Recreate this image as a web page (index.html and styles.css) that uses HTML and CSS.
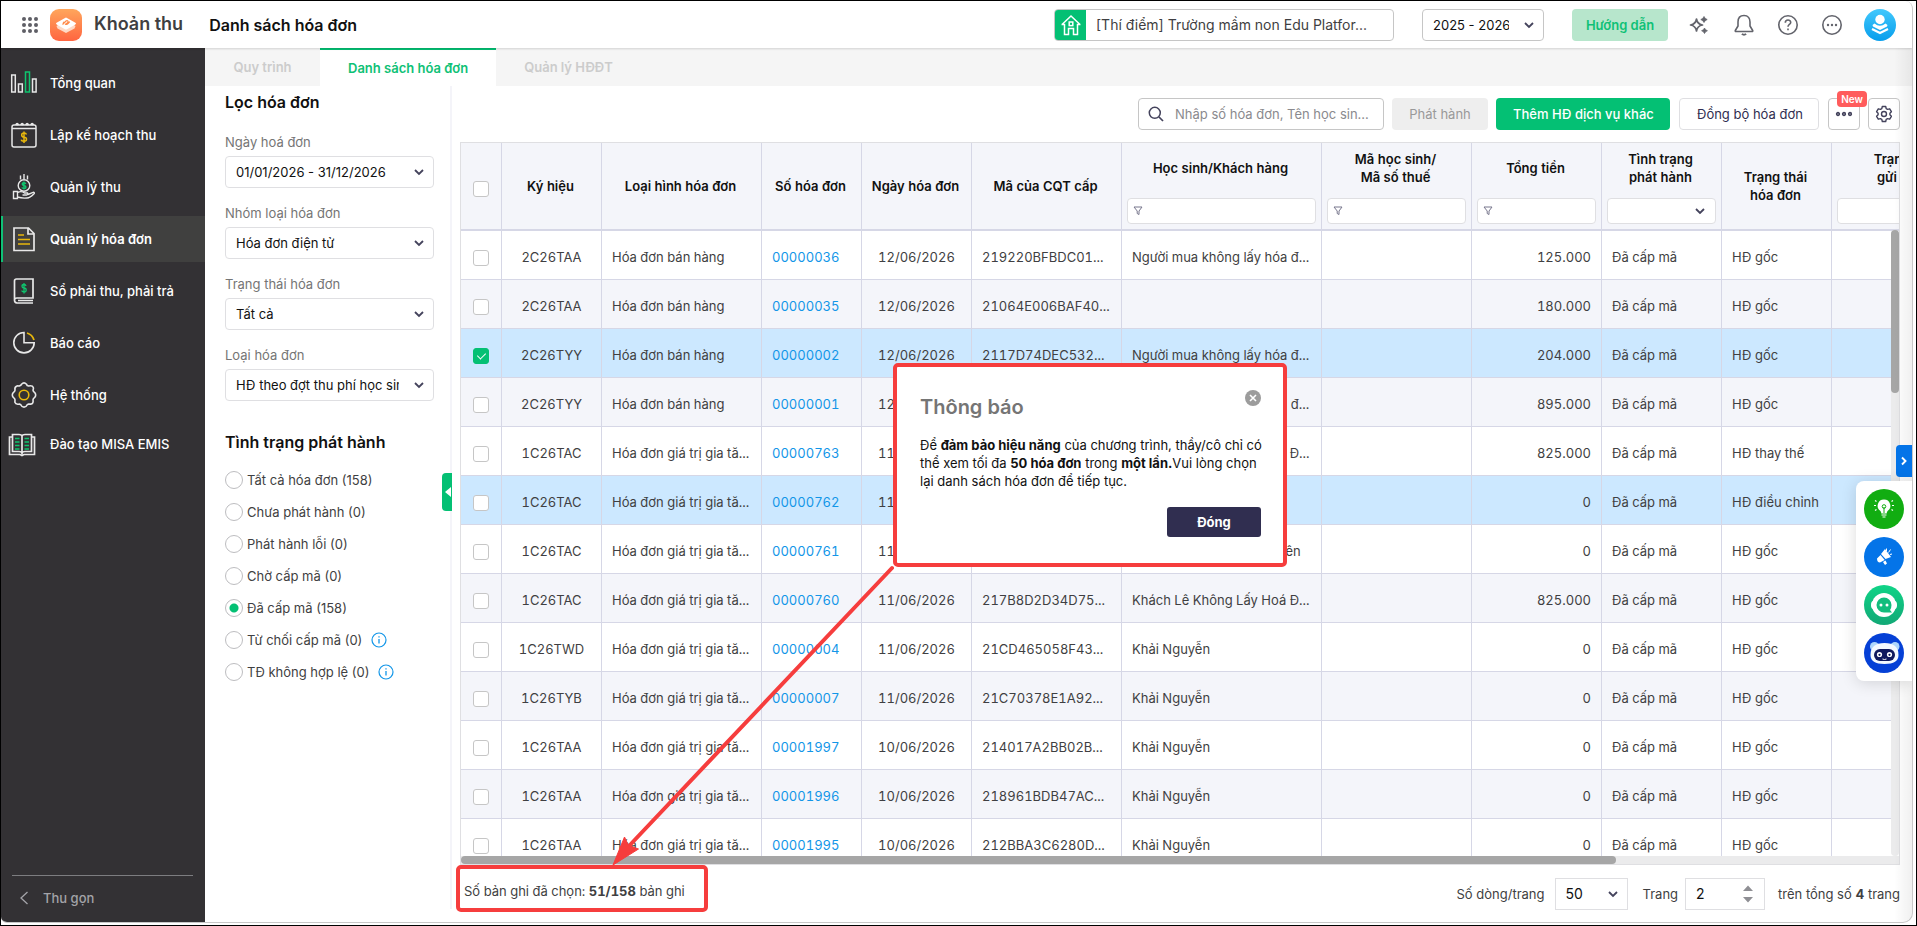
FILE: index.html
```html
<!DOCTYPE html>
<html lang="vi">
<head>
<meta charset="utf-8">
<title>Danh sách hóa đơn</title>
<link rel="stylesheet" href="styles.css">
</head>
<body>
<svg class="sprite" aria-hidden="true">
  <symbol id="chevron" viewBox="0 0 10 10"><path d="M1 3l4 4 4-4" fill="none" stroke="#44435c" stroke-width="1.8"/></symbol>
  <symbol id="funnel" viewBox="0 0 10 10"><path d="M1 1h8L6 5v3.5L4.200 7.500V5z" fill="none" stroke="#77768c" stroke-width="1"/></symbol>
  <symbol id="info" viewBox="0 0 16 16"><circle cx="8" cy="8" r="7" fill="none" stroke="#1296e8" stroke-width="1.200"/><path d="M8 7v4.500M8 4.200v1.400" stroke="#1296e8" stroke-width="1.300"/></symbol>
</svg>
<div class="window">
<div class="app">
  <header class="topbar">
    <button class="icon-btn" aria-label="Ứng dụng"><svg width="18" height="18" viewBox="0 0 18 18" fill="#5f5f66"><circle cx="3" cy="3" r="2"/><circle cx="9" cy="3" r="2"/><circle cx="15" cy="3" r="2"/><circle cx="3" cy="9" r="2"/><circle cx="9" cy="9" r="2"/><circle cx="15" cy="9" r="2"/><circle cx="3" cy="15" r="2"/><circle cx="9" cy="15" r="2"/><circle cx="15" cy="15" r="2"/></svg></button>
    <svg class="logo" width="32" height="32" viewBox="0 0 32 32"><defs><linearGradient id="lg" x1="0" y1="0" x2="0" y2="1"><stop offset="0" stop-color="#ffa65c"/><stop offset="1" stop-color="#ff6540"/></linearGradient></defs><rect width="32" height="32" rx="9" fill="url(#lg)"/><path d="M6.500 17l9.500-6 9.500 6-1 2.500L16 24l-8.500-4.500z" fill="#ffd9c6"/><path d="M6 14.500Q6 14 7 13.500l8-4.600q1-.6 2 0l8 4.600q1 .5 1 1t-1 1.200l-8 4.600q-1 .6-2 0l-8-4.600q-1-.6-1-1.200z" fill="#fff"/><path d="M12.500 15.500l3.500-3.500q1-.8 1.800 0t-.3 1.700l-2 1.800M14.500 14l-1.500-1M15 15q1.800 1 3-.4l1.800-2" fill="none" stroke="#ff8a4a" stroke-width="1.200"/></svg>
    <span class="product">Khoản thu</span>
    <h1 class="page-title">Danh sách hóa đơn</h1>
    <div class="school">
      <span class="school-icon"><svg width="22" height="22" viewBox="0 0 22 22" fill="none" stroke="#fff" stroke-width="1.500"><path d="M2 10.500l9-8.500 9 8.500M1.500 10.500h3v10h4v-6h5v6h4v-10h3"/><rect x="9.200" y="8" width="3.600" height="3.600"/></svg></span>
      <button class="school-name">[Thí điểm] Trường mầm non Edu Platfor...</button>
    </div>
    <div class="select year"><select aria-label="Năm học"><option>2025 - 2026</option></select><svg class="chev"><use href="#chevron"/></svg></div>
    <button class="btn guide">Hướng dẫn</button>
    <nav class="tools">
      <button class="icon-btn" aria-label="Trợ lý"><svg width="22" height="22" viewBox="0 0 22 22"><path d="M7.500 5q.8 5.200 6 6-5.200.8-6 6-.8-5.200-6-6 5.200-.8 6-6z" fill="none" stroke="#63646c" stroke-width="1.700" stroke-linejoin="round"/><path d="M15 2.500l1.200 1.900 2 1.100-2 1.200L15 8.500l-1.200-1.800-2-1.200 2-1.100zM15.500 14l1 1.700 1.900 1-1.900 1.100-1 1.700-1-1.700-1.900-1.100 1.900-1z" fill="#63646c" stroke="#63646c" stroke-width=".8"/></svg></button>
      <button class="icon-btn" aria-label="Thông báo"><svg width="22" height="22" viewBox="0 0 22 22" fill="none" stroke="#63646c" stroke-width="1.600" stroke-linejoin="round"><path d="M11 1.500c-4.200 0-6 3-6 6.500v4L2.300 16.500q-.3 1 .7 1h16q1 0 .7-1L17 12V8c0-3.500-1.800-6.500-6-6.500z"/><path d="M8.800 20q2.200 1.300 4.400 0" stroke-width="2"/></svg></button>
      <button class="icon-btn" aria-label="Trợ giúp"><svg width="22" height="22" viewBox="0 0 22 22" fill="none" stroke="#63646c" stroke-width="1.600"><circle cx="11" cy="11" r="9.200"/><path d="M8.300 8.800c0-3.700 5.400-3.500 5.400-.3 0 2-2.700 2-2.700 4.300M11 14.500v1.700"/></svg></button>
      <button class="icon-btn" aria-label="Thêm"><svg width="22" height="22" viewBox="0 0 22 22"><circle cx="11" cy="11" r="9.200" fill="none" stroke="#63646c" stroke-width="1.600"/><circle cx="7" cy="11" r="1.200" fill="#63646c"/><circle cx="11" cy="11" r="1.200" fill="#63646c"/><circle cx="15" cy="11" r="1.200" fill="#63646c"/></svg></button>
    </nav>
    <button class="icon-btn avatar" aria-label="Tài khoản"><svg width="32" height="32" viewBox="0 0 32 32"><defs><linearGradient id="av" x1="0" y1="0" x2="0" y2="1"><stop offset="0" stop-color="#42c8fc"/><stop offset="1" stop-color="#079eec"/></linearGradient></defs><circle cx="16" cy="16" r="16" fill="url(#av)"/><circle cx="16" cy="10.500" r="4.700" fill="#fff"/><path d="M10.500 14.500Q16 19 21.500 14.500l2 1.500-.5 1.500-7 3.500-7-3.500-.5-1.500z" fill="#fff"/><path d="M8 20l8 4 8-4" fill="none" stroke="#fff" stroke-width="2.200"/></svg></button>
  </header>

  <div class="body">
    <nav class="sidebar">
      <a class="nav-item" href="#"><svg width="28" height="28" viewBox="0 0 28 28" fill="none" stroke="#e8e8e8" stroke-width="1.500"><rect x="1.700" y="6" width="3.600" height="17"/><rect x="8.500" y="15" width="3.800" height="8"/><rect x="15.500" y="3" width="4" height="20" stroke="#0fc46e"/><rect x="22.500" y="10" width="3.600" height="13"/></svg>Tổng quan</a>
      <a class="nav-item" href="#"><svg width="28" height="28" viewBox="0 0 28 28" fill="none" stroke="#e8e8e8" stroke-width="1.500"><rect x="2" y="4" width="24" height="22" rx="2"/><path d="M2 7.500h24"/><path d="M6 4q1-2.500 2.500 0M11 4q1-2.500 2.500 0M16 4q1-2.500 2.500 0M21 4q1-2.500 2.500 0" stroke-width="2"/><path d="M16.500 13.500q-.5-1.500-2.500-1.500-2.300 0-2.300 2T14 16.300q2.500 0 2.500 2t-2.500 2-2.700-1.600M14 10.500v11.500" stroke="#e8b70c"/></svg>Lập kế hoạch thu</a>
      <a class="nav-item" href="#"><svg width="28" height="28" viewBox="0 0 28 28" fill="none" stroke="#e8e8e8" stroke-width="1.400"><path d="M14 1v5M10.500 2.500v4M17.500 2.500v4"/><circle cx="14" cy="12.500" r="5.800"/><path d="M15.800 11q-.4-1.300-1.800-1.300-1.800 0-1.800 1.400T14 12.600q1.900 0 1.900 1.500T14 15.500t-2-1.200M14 8.500v8" stroke="#0fc46e"/><path d="M3.500 18.500h4v7h-4zM7.500 19.500q4-2 7 .5h3q1 1.500-1 2h-4M18 21.500l5.500-2.300q1.500.5.500 1.600-4 4.200-7 4.200-5 .5-9.500-1"/></svg>Quản lý thu</a>
      <a class="nav-item active" href="#" aria-current="page"><svg width="28" height="28" viewBox="0 0 28 28" fill="none" stroke="#e8e8e8" stroke-width="1.700"><path d="M4 3h14.500l5.500 5.500V25.500H4zM18 3v6h6"/><path d="M8 10h6M8 14.500h12M8 19h12" stroke="#e8b70c" stroke-width="1.500"/></svg>Quản lý hóa đơn</a>
      <a class="nav-item" href="#"><svg width="28" height="28" viewBox="0 0 28 28" fill="none" stroke="#e8e8e8" stroke-width="1.700"><path d="M4.500 23.500V4q0-2 2-2H23v19H7q-2.500 0-2.500 2.300T7 26h16M8 23.500h15"/><path d="M16 9q-.3-1.500-2-1.500-2 0-2 1.700t2 1.800q2.200 0 2.200 2t-2.200 1.800-2.200-1.400M14 6v10.500" stroke="#0fc46e" stroke-width="1.300"/></svg>Sổ phải thu, phải trả</a>
      <a class="nav-item" href="#"><svg width="28" height="28" viewBox="0 0 28 28" fill="none" stroke="#e8e8e8" stroke-width="1.600"><path d="M14 3.500a10.200 10.200 0 1 0 10.200 10.200H14z"/><path d="M17 4a10.500 10.500 0 0 1 7 7" stroke="#e8b70c" stroke-width="1.800"/></svg>Báo cáo</a>
      <a class="nav-item" href="#"><svg width="28" height="28" viewBox="0 0 28 28" fill="none" stroke="#e8e8e8" stroke-width="1.600" stroke-linejoin="round"><path d="M11.500 3.200q2.500-2.600 5 0l.7 1.300 1.500.5q3.800-.8 4.600 1.600.4 1.300-.3 2.600.2 1.300 1.200 1.900 1.500 1.200 1.500 2.900t-1.500 2.900q-1 .6-1.200 1.900.7 3.800-2.300 4.300l-2-.1-1.500.7q-1 2.400-3.200 2.400t-3.200-2.400l-1.500-.7q-3.600.8-4.400-1.700l.1-2.500q-.2-1.300-1.200-1.900Q2.300 15.700 2.300 14t1.500-2.900Q4.800 10.500 5 9.200q-.7-3.500 2-4.300l2.300.1 1.500-.7z"/><circle cx="14" cy="14" r="4.800" stroke="#e8b70c"/></svg>Hệ thống</a>
      <a class="nav-item" href="#"><svg class="book" width="28" height="28" viewBox="0 0 28 28" fill="none" stroke="#e8e8e8" stroke-width="1.700"><path d="M4.500 4.500H11q2.500 0 3 1.500.5-1.500 3-1.500h6.500v17H17q-2.500 0-3 1.500-.5-1.500-3-1.500H4.500zM14 6v18M4 7H1.500v17.500H12l2 1 2-1h10.500V7H24"/><path d="M7 8.500h4.500M7 12h4.500M7 15.500h4.500M7 19h4.500M16.500 8.500H21M16.500 12H21M16.500 15.500H21M16.500 19H21" stroke="#0fc46e" stroke-width="1.500"/></svg>Đào tạo MISA EMIS</a>
      <button class="collapse"><svg width="10" height="14" viewBox="0 0 10 14"><path d="M8.500 1L2 7l6.500 6" fill="none" stroke="#a3a3a8" stroke-width="1.300"/></svg>Thu gọn</button>
    </nav>

    <div class="content">
      <nav class="tabs">
        <a class="tab" href="#">Quy trình</a>
        <a class="tab current" href="#" aria-current="page">Danh sách hóa đơn</a>
        <a class="tab" href="#">Quản lý HĐĐT</a>
      </nav>
      <div class="panes">
        <aside class="filters">
          <h2>Lọc hóa đơn</h2>
          <label for="f1">Ngày hoá đơn</label>
          <div class="select"><select id="f1"><option>01/01/2026 - 31/12/2026</option></select><svg class="chev"><use href="#chevron"/></svg></div>
          <label for="f2">Nhóm loại hóa đơn</label>
          <div class="select"><select id="f2"><option>Hóa đơn điện tử</option></select><svg class="chev"><use href="#chevron"/></svg></div>
          <label for="f3">Trạng thái hóa đơn</label>
          <div class="select"><select id="f3"><option>Tất cả</option></select><svg class="chev"><use href="#chevron"/></svg></div>
          <label for="f4">Loại hóa đơn</label>
          <div class="select"><select id="f4"><option>HĐ theo đợt thu phí học sinh</option></select><svg class="chev"><use href="#chevron"/></svg></div>
          <h2 class="second">Tình trạng phát hành</h2>
          <label class="radio"><input type="radio" name="st">Tất cả hóa đơn (158)</label>
          <label class="radio"><input type="radio" name="st">Chưa phát hành (0)</label>
          <label class="radio"><input type="radio" name="st">Phát hành lỗi (0)</label>
          <label class="radio"><input type="radio" name="st">Chờ cấp mã (0)</label>
          <label class="radio"><input type="radio" name="st" checked>Đã cấp mã (158)</label>
          <label class="radio"><input type="radio" name="st">Từ chối cấp mã (0)<svg class="info"><use href="#info"/></svg></label>
          <label class="radio"><input type="radio" name="st">TĐ không hợp lệ (0)<svg class="info"><use href="#info"/></svg></label>
          <button class="handle" aria-label="Thu gọn bộ lọc"><svg width="6" height="10" viewBox="0 0 6 10"><path d="M6 0v10L0 5z" fill="#fff"/></svg></button>
        </aside>

        <main class="main">
          <div class="toolbar">
            <div class="search"><svg width="16" height="16" viewBox="0 0 16 16"><circle cx="6.800" cy="6.800" r="5.500" fill="none" stroke="#44435c" stroke-width="1.500"/><path d="M11 11l4 4" stroke="#44435c" stroke-width="1.700"/></svg><input type="text" aria-label="Tìm kiếm" placeholder="Nhập số hóa đơn, Tên học sin..."></div>
            <button class="btn muted" disabled>Phát hành</button>
            <button class="btn primary">Thêm HĐ dịch vụ khác</button>
            <button class="btn outline">Đồng bộ hóa đơn</button>
            <button class="btn square" aria-label="Khác"><svg width="18" height="6" viewBox="0 0 18 6" fill="#8a8998" stroke="#44435c" stroke-width="1.300"><circle cx="3" cy="3" r="1.500"/><circle cx="9" cy="3" r="1.500"/><circle cx="15" cy="3" r="1.500"/></svg><span class="badge">New</span></button>
            <button class="btn square" aria-label="Thiết lập"><svg width="18" height="18" viewBox="0 0 18 18" fill="none" stroke="#44435c" stroke-width="1.400" stroke-linejoin="round"><path d="M7.300 1.500h3.400l.5 2.100 1.400.8 2.100-.6 1.700 2.900-1.500 1.500v1.600l1.500 1.500-1.700 2.900-2.100-.6-1.400.8-.5 2.100H7.300l-.5-2.100-1.400-.8-2.100.6-1.700-2.900 1.500-1.500V8.200L1.600 6.700l1.700-2.900 2.100.6 1.400-.8z"/><circle cx="9" cy="9" r="2.500"/></svg></button>
          </div>

          <div class="grid">
            <table>
              <colgroup><col class="w41"><col class="w100"><col class="w160"><col class="w100"><col class="w110"><col class="w150"><col class="w200"><col class="w150"><col class="w130"><col class="w120"><col class="w110"><col class="w150"></colgroup>
              <thead><tr>
                <th><input type="checkbox" aria-label="Chọn tất cả"></th>
                <th>Ký hiệu</th><th>Loại hình hóa đơn</th><th>Số hóa đơn</th><th>Ngày hóa đơn</th><th>Mã của CQT cấp</th>
                <th><div class="fhead"><span>Học sinh/Khách hàng</span><div class="fbox"><svg class="fun"><use href="#funnel"/></svg><input type="text" aria-label="Lọc khách hàng"></div></div></th>
                <th><div class="fhead"><span>Mã học sinh/<br>Mã số thuế</span><div class="fbox"><svg class="fun"><use href="#funnel"/></svg><input type="text" aria-label="Lọc mã"></div></div></th>
                <th><div class="fhead"><span>Tổng tiền</span><div class="fbox"><svg class="fun"><use href="#funnel"/></svg><input type="text" aria-label="Lọc tổng tiền"></div></div></th>
                <th><div class="fhead"><span>Tình trạng<br>phát hành</span><div class="fbox"><select aria-label="Lọc tình trạng"><option></option></select><svg class="chev"><use href="#chevron"/></svg></div></div></th>
                <th>Trạng thái<br>hóa đơn</th>
                <th><div class="fhead"><span>Trạng thái<br>gửi email</span><div class="fbox"><input type="text" aria-label="Lọc gửi"></div></div></th>
              </tr></thead>
              <tbody>
                <tr><td><input type="checkbox" aria-label="Chọn"></td><td>2C26TAA</td><td>Hóa đơn bán hàng</td><td><a href="#">00000036</a></td><td>12/06/2026</td><td>219220BFBDC01...</td><td>Người mua không lấy hóa đ...</td><td></td><td>125.000</td><td>Đã cấp mã</td><td>HĐ gốc</td><td></td></tr>
                <tr><td><input type="checkbox" aria-label="Chọn"></td><td>2C26TAA</td><td>Hóa đơn bán hàng</td><td><a href="#">00000035</a></td><td>12/06/2026</td><td>21064E006BAF40...</td><td></td><td></td><td>180.000</td><td>Đã cấp mã</td><td>HĐ gốc</td><td></td></tr>
                <tr class="sel"><td><input type="checkbox" aria-label="Chọn" checked></td><td>2C26TYY</td><td>Hóa đơn bán hàng</td><td><a href="#">00000002</a></td><td>12/06/2026</td><td>2117D74DEC532...</td><td>Người mua không lấy hóa đ...</td><td></td><td>204.000</td><td>Đã cấp mã</td><td>HĐ gốc</td><td></td></tr>
                <tr><td><input type="checkbox" aria-label="Chọn"></td><td>2C26TYY</td><td>Hóa đơn bán hàng</td><td><a href="#">00000001</a></td><td>12/06/2026</td><td></td><td>Người mua không lấy hóa đ...</td><td></td><td>895.000</td><td>Đã cấp mã</td><td>HĐ gốc</td><td></td></tr>
                <tr><td><input type="checkbox" aria-label="Chọn"></td><td>1C26TAC</td><td>Hóa đơn giá trị gia tă...</td><td><a href="#">00000763</a></td><td>11/06/2026</td><td></td><td>Khách Lê Không Lấy Hoá Đ...</td><td></td><td>825.000</td><td>Đã cấp mã</td><td>HĐ thay thế</td><td></td></tr>
                <tr class="sel"><td><input type="checkbox" aria-label="Chọn"></td><td>1C26TAC</td><td>Hóa đơn giá trị gia tă...</td><td><a href="#">00000762</a></td><td>11/06/2026</td><td></td><td></td><td></td><td>0</td><td>Đã cấp mã</td><td>HĐ điều chỉnh</td><td></td></tr>
                <tr><td><input type="checkbox" aria-label="Chọn"></td><td>1C26TAC</td><td>Hóa đơn giá trị gia tă...</td><td><a href="#">00000761</a></td><td>11/06/2026</td><td></td><td>Nguyễn Hoàng Bảo Khuyên</td><td></td><td>0</td><td>Đã cấp mã</td><td>HĐ gốc</td><td></td></tr>
                <tr><td><input type="checkbox" aria-label="Chọn"></td><td>1C26TAC</td><td>Hóa đơn giá trị gia tă...</td><td><a href="#">00000760</a></td><td>11/06/2026</td><td>217B8D2D34D75...</td><td>Khách Lê Không Lấy Hoá Đ...</td><td></td><td>825.000</td><td>Đã cấp mã</td><td>HĐ gốc</td><td></td></tr>
                <tr><td><input type="checkbox" aria-label="Chọn"></td><td>1C26TWD</td><td>Hóa đơn giá trị gia tă...</td><td><a href="#">00000004</a></td><td>11/06/2026</td><td>21CD465058F43...</td><td>Khải Nguyễn</td><td></td><td>0</td><td>Đã cấp mã</td><td>HĐ gốc</td><td></td></tr>
                <tr><td><input type="checkbox" aria-label="Chọn"></td><td>1C26TYB</td><td>Hóa đơn giá trị gia tă...</td><td><a href="#">00000007</a></td><td>11/06/2026</td><td>21C70378E1A92...</td><td>Khải Nguyễn</td><td></td><td>0</td><td>Đã cấp mã</td><td>HĐ gốc</td><td></td></tr>
                <tr><td><input type="checkbox" aria-label="Chọn"></td><td>1C26TAA</td><td>Hóa đơn giá trị gia tă...</td><td><a href="#">00001997</a></td><td>10/06/2026</td><td>214017A2BB02B...</td><td>Khải Nguyễn</td><td></td><td>0</td><td>Đã cấp mã</td><td>HĐ gốc</td><td></td></tr>
                <tr><td><input type="checkbox" aria-label="Chọn"></td><td>1C26TAA</td><td>Hóa đơn giá trị gia tă...</td><td><a href="#">00001996</a></td><td>10/06/2026</td><td>218961BDB47AC...</td><td>Khải Nguyễn</td><td></td><td>0</td><td>Đã cấp mã</td><td>HĐ gốc</td><td></td></tr>
                <tr><td><input type="checkbox" aria-label="Chọn"></td><td>1C26TAA</td><td>Hóa đơn giá trị gia tă...</td><td><a href="#">00001995</a></td><td>10/06/2026</td><td>212BBA3C6280D...</td><td>Khải Nguyễn</td><td></td><td>0</td><td>Đã cấp mã</td><td>HĐ gốc</td><td></td></tr>
              </tbody>
            </table>
            <div class="vtrack"><div class="vthumb"></div></div>
            <div class="htrack"><div class="hthumb"></div></div>
          </div>

          <footer class="footer">
            <p class="count">Số bản ghi đã chọn: <b>51/158</b> bản ghi</p>
            <label for="size">Số dòng/trang</label>
            <div class="select size"><select id="size"><option>50</option></select><svg class="chev"><use href="#chevron"/></svg></div>
            <label for="page">Trang</label>
            <div class="spin"><input id="page" type="text" value="2"><svg width="10" height="18" viewBox="0 0 10 18" fill="#8f8f94"><path d="M0 6l5-5.500L10 6zM0 12h10l-5 5.500z"/></svg></div>
            <span class="total">trên tổng số <b>4</b> trang</span>
          </footer>
        </main>
      </div>
    </div>
  </div>
  <div class="edge"></div>
  <button class="dock-toggle" aria-label="Ẩn tiện ích"><svg width="8" height="10" viewBox="0 0 8 10"><path d="M2 1.500L5.500 5 2 8.500" fill="none" stroke="#fff" stroke-width="1.900"/></svg></button>
  <div class="dock">
    <button aria-label="Gợi ý"><svg width="40" height="40" viewBox="0 0 40 40"><circle cx="20" cy="20" r="20" fill="#11ad11"/><path d="M20 10.500a6.300 6.300 0 0 0-3.600 11.500q.8.900.9 2.500h5.400q.1-1.600.9-2.500A6.300 6.300 0 0 0 20 10.500z" fill="#fff"/><path d="M17.500 26h5M18.500 28h3" stroke="#fff" stroke-width="1.200"/><path d="M20 24v-6" stroke="#11ad11" stroke-width="1"/><circle cx="20" cy="17.500" r="1.800" fill="none" stroke="#11ad11"/><path d="M12.500 12.500l-1.500-1M27.500 12.500l1.500-1M12 16.500h-2M28 16.500h2M12.500 20.500l-1.500 1M27.500 20.500l1.500 1" stroke="#fff" stroke-width="1.200"/></svg></button>
    <button aria-label="Tin tức"><svg width="40" height="40" viewBox="0 0 40 40"><circle cx="20" cy="20" r="20" fill="#0474e8"/><path d="M17 17l4-5 6 8-5.500 2zM13 21.500l3.500-3.500 4.200 5L16 25.500q-3 0-3-4zM19 25l2.500-1.500 1.500 3-2 1.500z" fill="#fff"/><path d="M22.500 14V11.500M24.500 15.500l2-3M26 17.500l2-.5" stroke="#fff" stroke-width="1"/></svg></button>
    <button aria-label="Hỗ trợ"><svg width="40" height="40" viewBox="0 0 40 40"><defs><linearGradient id="ch" x1="0" y1="0" x2="0" y2="1"><stop offset="0" stop-color="#10d487"/><stop offset="1" stop-color="#12a876"/></linearGradient></defs><circle cx="20" cy="20" r="20" fill="url(#ch)"/><circle cx="20" cy="20" r="12" fill="#fff"/><rect x="7" y="15.500" width="26" height="9" rx="4" fill="#fff"/><path d="M28 27.500h-8a7.500 7.500 0 1 1 7.500-7.500q0 3-1.500 5z" fill="#12bd7d"/><circle cx="17" cy="20" r="1.500" fill="#fff"/><circle cx="23" cy="20" r="1.500" fill="#fff"/></svg></button>
    <button aria-label="Trợ lý AI"><svg width="40" height="40" viewBox="0 0 40 40"><circle cx="20" cy="20" r="20" fill="#0540d6"/><circle cx="10.500" cy="13.500" r="4.500" fill="#aed6fb"/><circle cx="31" cy="13.500" r="4.500" fill="#aed6fb"/><path d="M6.500 22Q6.500 10 20.500 10T34.500 22q0 9-14 9t-14-9z" fill="#f4f9ff"/><rect x="10" y="16" width="21" height="12" rx="6" fill="#10195e"/><circle cx="15.500" cy="21.500" r="2.600" fill="#fff"/><circle cx="25.500" cy="21.500" r="2.600" fill="#fff"/><circle cx="15.500" cy="21.800" r="1.100" fill="#10195e"/><circle cx="25.500" cy="21.800" r="1.100" fill="#10195e"/><path d="M18.500 26q2 1 4 0" fill="none" stroke="#fff"/></svg></button>
  </div>
</div>

<section class="dialog" role="dialog" aria-labelledby="dlg">
  <div class="dialog-head"><h2 id="dlg">Thông báo</h2><button class="icon-btn close" aria-label="Đóng hộp thoại"><svg width="16" height="16" viewBox="0 0 16 16"><circle cx="8" cy="8" r="8" fill="#9c9c9c"/><path d="M5 5l6 6M11 5l-6 6" stroke="#fff" stroke-width="1.600"/></svg></button></div>
  <p>Để <b>đảm bảo hiệu năng</b> của chương trình, thầy/cô chỉ có thể xem tối đa <b>50 hóa đơn</b> trong <b>một lần.</b>Vui lòng chọn lại danh sách hóa đơn để tiếp tục.</p>
  <button class="ok">Đóng</button>
</section>
<div class="marker"></div>
<svg class="arrow" width="290" height="306" viewBox="0 0 290 306"><path d="M283 5L20 283" stroke="#f63d3d" stroke-width="4" stroke-linecap="round"/><path d="M4 302l11.500-28 4 8.500 10 3.500z" fill="#f63d3d" stroke="#f63d3d" stroke-width="1"/></svg>
</div>
</body>
</html>
```
FILE: styles.css
```css
* { box-sizing: border-box; }
body { margin: 0; font: 13px/18px Inter, "Liberation Sans", sans-serif; color: #3f3f42; }
button, input, select { font: inherit; color: inherit; margin: 0; }
button { cursor: pointer; }
a { text-decoration: none; }
h1, h2, p { margin: 0; }
.sprite { display: none; }

.window { position: relative; height: 100vh; border: 1px solid #000; padding: 0 3px 2px 0; background: #fff; overflow: hidden; }
.app { position: relative; height: 100%; display: flex; flex-direction: column; border-right: 1px solid #c8c8c8; border-bottom: 1px solid #c8c8c8; border-radius: 0 8px 10px 6px; overflow: hidden; }
.edge { position: absolute; inset: 0 0 0 auto; width: 18px; background: linear-gradient(to right, transparent, rgba(0,0,0,.06)); pointer-events: none; }

.topbar { position: relative; z-index: 1; flex: none; height: 47px; display: flex; align-items: center; padding: 0 16px 0 20px; background: #fff; box-shadow: 0 1px 2px rgba(0,0,0,.15); }
.icon-btn { display: flex; padding: 0; border: 0; background: none; }
.logo { margin: 0 12px 0 11px; }
.product { font-size: 18px; font-weight: 600; margin-right: 26px; padding-bottom: 2px; }
.page-title { font-size: 16px; font-weight: 600; color: #111; }
.school { display: flex; width: 340px; height: 32px; margin-left: auto; margin-right: 28px; border: 1px solid #c6c6c6; border-radius: 4px; overflow: hidden; }
.school-icon { flex: none; width: 31px; display: grid; place-items: center; background: #04c074; }
.school-name { flex: 1; padding: 0 10px; border: 0; background: none; text-align: left; font-size: 14px; white-space: nowrap; }
.select { position: relative; height: 32px; }
.select select { appearance: none; width: 100%; height: 100%; padding: 0 34px 0 10px; border: 1px solid #dfdfe2; border-radius: 4px; background: #fff; color: #111; }
.chev { position: absolute; right: 10px; top: 11px; width: 10px; height: 10px; pointer-events: none; }
.year { width: 122px; }
.year select { border-color: #c6c6c6; }
.btn { height: 32px; border-radius: 4px; border: 0; padding: 0 17px; white-space: nowrap; }
.guide { width: 96px; padding: 0; margin: 0 21px 0 28px; background: #b7e6cc; color: #0fc176; font-weight: 600; }
.tools { display: flex; gap: 22px; margin-right: 21px; }

.body { flex: 1; min-height: 0; display: flex; }
.sidebar { flex: none; width: 204px; display: flex; flex-direction: column; gap: 6px; padding-top: 12px; background: #333134; }
.nav-item { display: flex; align-items: center; gap: 12px; height: 46px; padding-left: 9px; color: #fff; font-weight: 500; }
.nav-item.active { background: #40403f; border-left: 2px solid #0fc176; padding-left: 7px; font-weight: 600; }
.nav-item:nth-last-child(2) { height: 40px; }
.book { margin: 0 2px 0 -2px; }
.collapse { display: flex; align-items: center; gap: 14px; height: 47px; margin: auto 12px 0 11px; padding: 0 0 2px 7px; border: 0; border-top: 1px solid #7d7d80; background: none; color: #a3a3a8; font-weight: 500; }

.content { flex: 1; min-width: 0; display: flex; flex-direction: column; }
.tabs { flex: none; display: flex; height: 38px; background: #f5f5f5; }
.tab { display: flex; align-items: center; justify-content: center; min-width: 115px; padding: 0 28px; color: #ccc; font-weight: 600; }
.tab.current { background: #fff; border-top: 2px solid #04c074; color: #0fc176; }
.panes { flex: 1; min-height: 0; display: flex; }

.filters { position: relative; flex: none; width: 247px; margin-bottom: 13px; padding: 6px 16px 0 20px; border-right: 2px solid #f4f4f9; }
.filters h2 { font-size: 16px; line-height: 20px; font-weight: 600; color: #111; }
.filters h2 + label { margin-top: 21px; }
.filters label { display: block; margin: 16px 0 5px; color: #757575; }
.filters h2.second { margin: 31px 0 19px; }
.filters label.radio { display: flex; align-items: center; height: 18px; margin: 0 0 14px; color: #3f3f42; }
.radio input { appearance: none; flex: none; width: 18px; height: 18px; margin-right: 4px; border: 1px solid #bdbdc0; border-radius: 50%; background: #fff; }
.radio input:checked { background: radial-gradient(circle, #04c074 4px, #fff 5px); }
.info { width: 16px; height: 16px; margin-left: 9px; }
.handle { position: absolute; right: -2px; top: 387px; width: 10px; height: 38px; padding: 0 1px 0 3px; border: 0; border-radius: 4px 0 0 4px; background: #04c074; display: grid; place-items: center; }

.main { flex: 1; min-width: 0; display: flex; flex-direction: column; padding: 12px 12px 12px 8px; }
.toolbar { display: flex; justify-content: flex-end; gap: 8px; margin-bottom: 12px; }
.search { display: flex; align-items: center; gap: 11px; width: 246px; padding-left: 9px; border: 1px solid #c6c6c6; border-radius: 4px; }
.search input { flex: 1; min-width: 0; border: 0; padding: 0; outline: 0; background: none; }
.search input::placeholder { color: #8a8a8e; }
.muted { width: 96px; background: #eee; color: #999; }
.primary { width: 174px; background: #04c074; color: #fff; font-weight: 500; }
.outline { width: 140px; margin: 0 1px; border: 1px solid #dfdfe2; background: #fff; color: #302e50; }
.square { position: relative; width: 32px; padding: 0; display: grid; place-items: center; border: 1px solid #c6c6c6; background: #fff; }
.badge { position: absolute; left: 8px; top: -8px; width: 30px; height: 16px; border-radius: 4px; background: #ff5c5c; color: #fff; font: 600 10px/16px Inter, sans-serif; }

.grid { position: relative; flex: 1; min-height: 0; border: 1px solid #dfdfe2; overflow: hidden; }
table { width: 1521px; table-layout: fixed; border-collapse: separate; border-spacing: 0; font-variant-numeric: tabular-nums; }
.w41 { width: 41px; } .w100 { width: 100px; } .w110 { width: 110px; } .w120 { width: 120px; } .w130 { width: 130px; } .w150 { width: 150px; } .w160 { width: 160px; } .w200 { width: 200px; }
th, td { padding: 0 10px; border-right: 1px solid #d6d7e6; border-bottom: 1px solid #d6d7e6; white-space: nowrap; overflow: hidden; }
th { height: 88px; padding: 0 7px 0 5px; background: #f4f5fa; color: #111; font-weight: 600; border-bottom-width: 2px; }
th:has(.fhead) { padding: 0 5px; }
td { height: 49px; padding-top: 4px; }
tr:nth-child(even) td { background: #f4f5fa; }
tbody .sel td, tbody .sel:nth-child(even) td { background: #cce8ff; }
td:first-child, th:first-child { padding: 5px 0 0; text-align: center; }
td:nth-child(2), td:nth-child(5) { text-align: center; }
td:nth-child(9) { text-align: right; }
td a { color: #1296e8; }
th input[type=checkbox], td input { appearance: none; display: block; width: 16px; height: 16px; margin: 0 auto; border: 1px solid #c6c6c6; border-radius: 3px; background: #fff; }
td input:checked { border-color: #04c074; background: #04c074; position: relative; }
td input:checked::after { content: ""; position: absolute; left: 5px; top: 2px; width: 4px; height: 7px; border: solid #fff; border-width: 0 1px 1px 0; transform: rotate(45deg); }
.fhead { display: flex; flex-direction: column; height: 86px; padding-bottom: 5px; }
.fhead > span { flex: 1; display: grid; place-content: center; padding: 0 2px 6px 0; }
.fbox { position: relative; display: flex; align-items: center; height: 26px; border: 1px solid #dfdfe2; border-radius: 4px; background: #fff; }
.fbox input, .fbox select { appearance: none; width: 100%; height: 100%; border: 0; background: none; }
.fbox .chev { top: 7px; }
.fun { position: absolute; left: 5px; width: 10px; height: 10px; }
.vtrack { position: absolute; right: 0; top: 87px; bottom: 8px; width: 8px; border-radius: 4px; background: #ebebec; }
.vthumb { height: 26%; border-radius: 4px; background: #a6a6a6; }
.htrack { position: absolute; left: 0; right: 0; bottom: 0; height: 8px; padding-right: 8px; background: #ebebec; }
.hthumb { width: 80.8%; height: 8px; border-radius: 4px; background: #a6a6a6; }

.footer { flex: none; display: flex; align-items: center; height: 32px; margin-top: 13px; }
.count { margin: 0 auto 6px 4px; font-variant-numeric: tabular-nums; }
.size { width: 73px; margin: 0 15px 0 10px; }
.size select, .spin { border: 1px solid #dfdfe2; border-radius: 0; font-size: 14px; }
.spin { display: flex; align-items: center; width: 80px; height: 32px; margin: 0 13px 0 7px; padding: 0 11px 0 10px; color: #111; }
.spin input { flex: 1; min-width: 0; border: 0; padding: 0; }

.dock-toggle { position: absolute; right: 0; top: 444px; width: 16px; height: 32px; padding: 0; border: 0; border-radius: 4px 0 0 4px; background: #0474e8; display: grid; place-items: center; }
.dock { position: absolute; right: 0; top: 480px; display: grid; gap: 8px; padding: 8px; border-radius: 8px 0 0 8px; background: #fff; box-shadow: 0 2px 16px rgba(0,0,0,.14); }
.dock button { display: flex; padding: 0; border: 0; background: none; }

.dialog { position: absolute; left: 892px; top: 362px; width: 394px; height: 204px; padding: 23px 22px 0 23px; border: 4px solid #f63d3d; border-radius: 5px; background: #fff; color: #111; }
.dialog-head { display: flex; justify-content: space-between; align-items: flex-start; height: 46px; }
.dialog h2 { margin-top: 3px; font-size: 20px; line-height: 28px; font-weight: 600; color: #757575; }
.dialog p { margin-right: -12px; }
.dialog b, .footer b { font-weight: 700; }
.ok { display: block; width: 94px; height: 30px; margin: 17px 0 0 auto; border: 0; border-radius: 3px; background: #302e50; color: #fff; font-weight: 700; }
.marker { position: absolute; left: 455px; top: 864px; width: 252px; height: 47px; border: 4px solid #f63d3d; border-radius: 5px; pointer-events: none; }
.arrow { position: absolute; left: 608px; top: 562px; pointer-events: none; }
```
